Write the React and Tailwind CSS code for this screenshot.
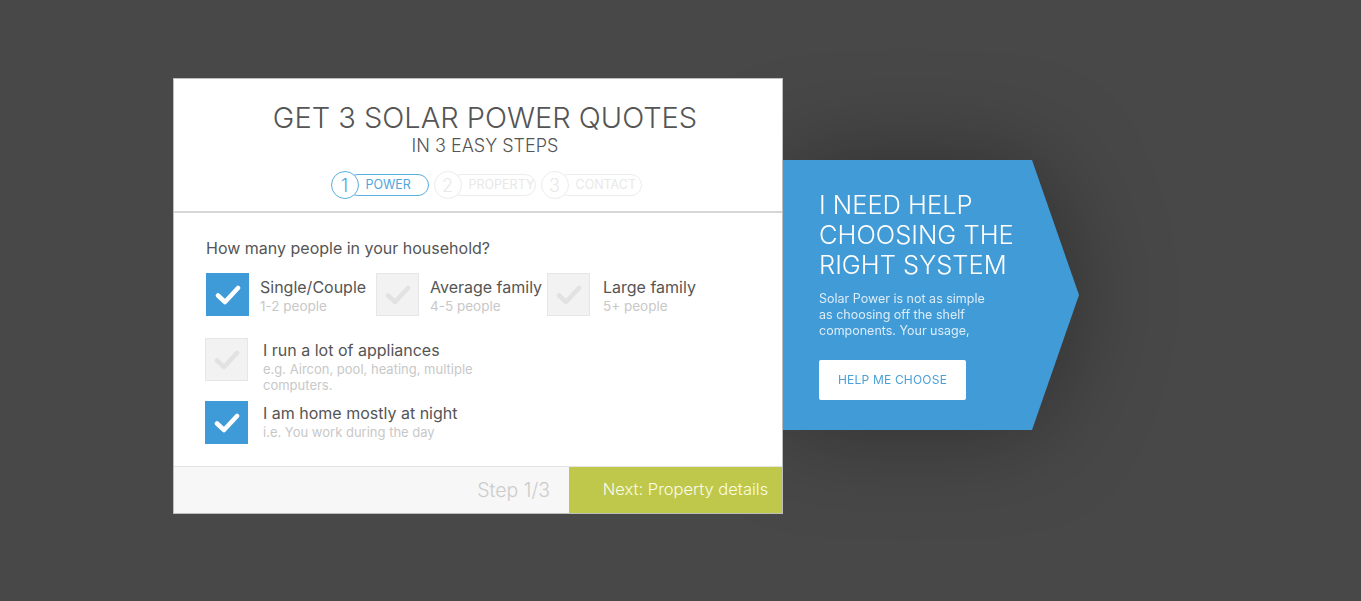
import React from "react";

const font = { fontFamily: "Inter, 'Noto Sans', sans-serif" };

function Check({ color }) {
    return (
        <svg width="26" height="22" viewBox="0 0 26 22" fill="none">
            <path d="M3 11.5 L10 18 L23 4" stroke={color} strokeWidth="4.5" strokeLinecap="round" strokeLinejoin="round" />
        </svg>
    );
}

function Box({ checked }) {
    return checked ? (
        <div className="w-[43px] h-[43px] shrink-0 bg-[#3f9ad8] flex items-center justify-center">
            <Check color="#ffffff" />
        </div>
    ) : (
        <div className="w-[43px] h-[43px] shrink-0 bg-[#f2f2f2] border border-[#e6e6e6] flex items-center justify-center">
            <Check color="#e2e2e2" />
        </div>
    );
}

function StepPill({ num, label, active, w }) {
    const c = active ? "border-[#5aaee0] text-[#4ea6dc]" : "border-[#ececec] text-[#e8e8e8]";
    return (
        <div className="flex items-center">
            <div className={`relative z-10 w-[28px] h-[28px] rounded-full border-[1.5px] bg-white flex items-center justify-center text-[18px] font-light ${c}`}>
                {num}
            </div>
            <div className={`-ml-[12px] ${w} pl-[18px] h-[22px] rounded-full border-[1.5px] flex items-center overflow-hidden whitespace-nowrap text-[12.5px] ${c}`}>
                {label}
            </div>
        </div>
    );
}

function Option({ checked, title, sub, w, gap }) {
    return (
        <div className={`flex ${w}`}>
            <Box checked={checked} />
            <div className={`${gap} pt-[3px] whitespace-nowrap`}>
                <div className="text-[16px] leading-[22px] text-[#555555]">{title}</div>
                <div className="text-[13.5px] leading-[16px] text-[#c8c8c8]">{sub}</div>
            </div>
        </div>
    );
}

export default function App() {
    return (
        <div className="w-full h-[601px] bg-[#484848] overflow-hidden flex items-start pl-[173px] pt-[78px]" style={font}>
            <div className="relative z-10 w-[610px] h-[436px] bg-white border border-[#bdbdbd] flex flex-col">
                <div className="flex flex-col items-center pt-[20px] h-[134px] border-b-2 border-[#d6d6d6] pl-[14px]">
                    <h1 className="text-[29px] leading-[38px] font-light text-[#555555]">GET 3 SOLAR POWER QUOTES</h1>
                    <h2 className="text-[18px] leading-[22px] font-light text-[#555555] -mt-[2px]">IN 3 EASY STEPS</h2>
                    <div className="flex gap-[5px] mt-[14px] ml-[2px]">
                        <StepPill num="1" label="POWER" active w="w-[82px]" />
                        <StepPill num="2" label="PROPERTY" w="w-[86px]" />
                        <StepPill num="3" label="CONTACT" w="w-[85px]" />
                    </div>
                </div>
                <div className="flex-1 pl-[32px] pt-[24px]">
                    <p className="text-[16px] leading-[22px] text-[#555555]">How many people in your household?</p>
                    <div className="flex mt-[14px]">
                        <Option checked title="Single/Couple" sub="1-2 people" w="w-[170px]" gap="ml-[11px]" />
                        <Option title="Average family" sub="4-5 people" w="w-[171px]" gap="ml-[11px]" />
                        <Option title="Large family" sub="5+ people" w="" gap="ml-[13px]" />
                    </div>
                    <div className="flex mt-[22px] -ml-[1px]">
                        <Box />
                        <div className="ml-[15px] pt-[1px]">
                            <div className="text-[16px] leading-[22px] text-[#555555]">I run a lot of appliances</div>
                            <div className="text-[13px] leading-[16px] text-[#c8c8c8] w-[215px]">e.g. Aircon, pool, heating, multiple computers.</div>
                        </div>
                    </div>
                    <div className="flex mt-[8px] -ml-[1px]">
                        <Box checked />
                        <div className="ml-[15px] pt-[1px]">
                            <div className="text-[16px] leading-[22px] text-[#555555]">I am home mostly at night</div>
                            <div className="text-[13px] leading-[16px] text-[#c8c8c8]">i.e. You work during the day</div>
                        </div>
                    </div>
                </div>
                <div className="h-[47px] flex border-t border-[#e4e4e4]">
                    <div className="flex-1 bg-[#f7f7f7] flex items-center justify-end pr-[19px] pt-[1px]">
                        <span className="text-[19.5px] font-light text-[#cccccc]">Step 1/3</span>
                    </div>
                    <div className="w-[213px] bg-[#bfc84b] flex items-center justify-center pl-[20px] pb-[2px]">
                        <span className="text-[16.5px] font-light text-[#fbfbe8]">Next: Property details</span>
                    </div>
                </div>
            </div>
            <div className="mt-[82px] [filter:drop-shadow(0_0_50px_rgba(0,0,0,0.35))]">
                <div className="w-[296px] h-[270px] bg-[#419bd6] pl-[36px] pt-[30px] [clip-path:polygon(0_0,249px_0,296px_135px,249px_100%,0_100%)]">
                    <div className="text-[25.5px] leading-[30px] font-light text-white">
                        I NEED HELP<br />CHOOSING THE<br />RIGHT SYSTEM
                    </div>
                    <p className="mt-[11px] text-[12.5px] leading-[16px] text-[#dcecf8] w-[180px]">
                        Solar Power is not as simple as choosing off the shelf components. Your usage,
                    </p>
                    <button className="mt-[21px] w-[147px] h-[40px] bg-white rounded-[2px] text-[12px] text-[#4aa0d8] tracking-[0.2px]">
                        HELP ME CHOOSE
                    </button>
                </div>
            </div>
        </div>
    );
}
